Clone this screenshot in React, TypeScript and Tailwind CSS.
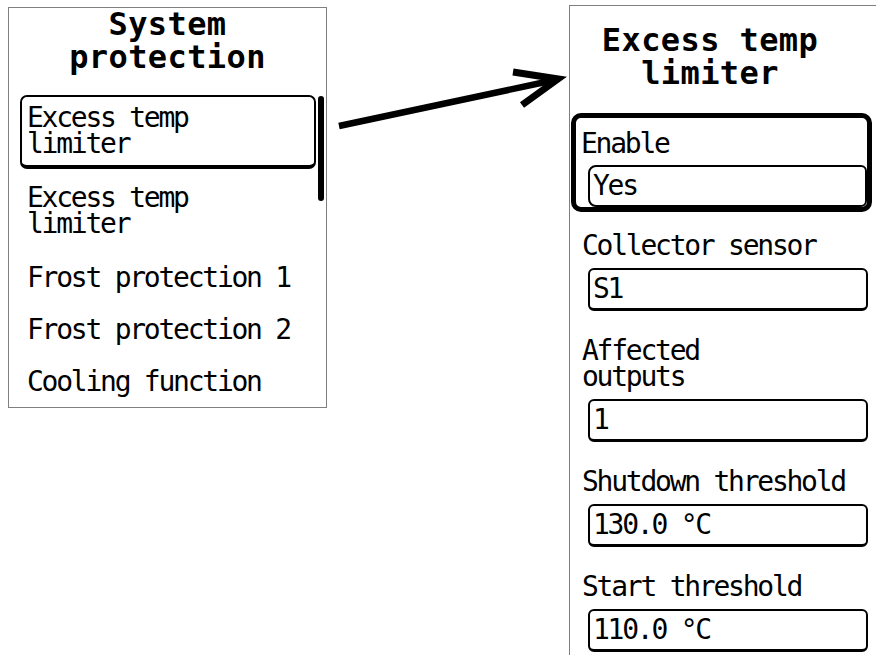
import { Fragment } from 'react';

const mono = "font-['DejaVu_Sans_Mono',monospace]";

function Lines({ lines }: { lines: string[] }) {
  return (
    <div className="leading-[26px] whitespace-pre">
      {lines.map((l, i) => (
        <Fragment key={l}>
          {i > 0 && <br />}
          {l}
        </Fragment>
      ))}
    </div>
  );
}

function Title({ lines, className }: { lines: string[]; className?: string }) {
  return (
    <div className={`text-center text-[32px] leading-[33px] font-bold tracking-[0.4px] text-black ${className ?? ''}`}>
      {lines.map((l, i) => (
        <Fragment key={l}>
          {i > 0 && <br />}
          {l}
        </Fragment>
      ))}
    </div>
  );
}

function MenuItem({ lines, pad }: { lines: string[]; pad: string }) {
  return (
    <div className={`pl-[18px] ${pad}`}>
      <Lines lines={lines} />
    </div>
  );
}

function ValueField({ value }: { value: string }) {
  return (
    <div className="mt-[9px] ml-[18px] mr-[8px] flex h-[43px] items-center rounded-[6px] border-2 border-b-[3px] border-black pl-[3px]">
      <span className="leading-[26px] whitespace-pre">{value}</span>
    </div>
  );
}

function Setting({ label, value, top }: { label: string[]; value: string; top: string }) {
  return (
    <div className={top}>
      <div className="pl-[12px]">
        <Lines lines={label} />
      </div>
      <ValueField value={value} />
    </div>
  );
}

export default function App() {
  return (
    <div className={`flex h-[655px] w-[876px] items-start overflow-hidden bg-white text-[28px] tracking-[-2.25px] text-black ${mono}`}>
      {/* Menu screen */}
      <div className="relative mt-[7px] ml-[8px] h-[401px] w-[319px] shrink-0 border border-[#7f7f7f]">
        <Title lines={['System', 'protection']} />
        <div className="mt-[18px]">
          <div className="py-[3px] pl-[11px] pr-[10px]">
            <div className="rounded-[7px] border-2 border-b-4 border-black pt-[8px] pb-[8px] pl-[5px]">
              <Lines lines={['Excess temp', 'limiter']} />
            </div>
          </div>
          <MenuItem lines={['Excess temp', 'limiter']} pad="pt-[13px] pb-[15px]" />
          <MenuItem lines={['Frost protection 1']} pad="py-[13px]" />
          <MenuItem lines={['Frost protection 2']} pad="py-[13px]" />
          <MenuItem lines={['Cooling function']} pad="pt-[13px] pb-[11px]" />
        </div>
        {/* scrollbar */}
        <div className="absolute top-[88px] left-[309px] h-[105px] w-[6px] rounded-full bg-black" />
      </div>

      {/* Arrow */}
      <svg width="242" height="140" viewBox="0 0 242 140" className="shrink-0">
        <path d="M12 126 L228 80" stroke="black" strokeWidth="6.5" fill="none" />
        <path d="M186 72 L231 79 L195 105" stroke="black" strokeWidth="7" fill="none" strokeLinejoin="miter" />
      </svg>

      {/* Detail screen */}
      <div className="mt-[5px] h-[650px] flex-1 overflow-hidden border-t border-l border-[#7f7f7f]">
        <Title lines={['Excess temp', 'limiter']} className="pt-[18px] pr-[26px]" />
        <div className="mt-[23px] ml-[1px] mr-[4px] rounded-[10px] border-[5px] border-black pt-[13px] pl-[5px]">
          <div className="leading-[26px]">Enable</div>
          <div className="mt-[8px] ml-[7px] flex h-[42px] items-center rounded-l-[8px] rounded-r-[6px] border-2 border-black pl-[3px]">
            <span className="leading-[26px]">Yes</span>
          </div>
        </div>
        <Setting label={['Collector sensor']} value="S1" top="mt-[21px]" />
        <Setting label={['Affected', 'outputs']} value="1" top="mt-[27px]" />
        <Setting label={['Shutdown threshold']} value="130.0 °C" top="mt-[27px]" />
        <Setting label={['Start threshold']} value="110.0 °C" top="mt-[27px]" />
      </div>
    </div>
  );
}
